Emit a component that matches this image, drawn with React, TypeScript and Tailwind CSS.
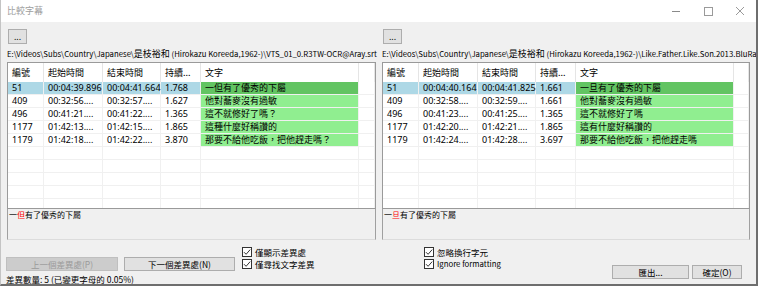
import React from "react";

const CJK = "font-['Noto_Sans_CJK_TC',sans-serif]";
const LISTF = "font-['Noto_Sans','Noto_Sans_CJK_TC',sans-serif]";

const widths = [36, 59, 58, 40, 158];

const leftRows = [
  ["51", "00:04:39.896", "00:04:41.664", "1.768", "一但有了優秀的下屬"],
  ["409", "00:32:56....", "00:32:57....", "1.627", "他對蕎麥沒有過敏"],
  ["496", "00:41:21....", "00:41:22....", "1.365", "這不就修好了嗎？"],
  ["1177", "01:42:13....", "01:42:15....", "1.865", "這種什麼好稱讚的"],
  ["1179", "01:42:18....", "01:42:22....", "3.870", "那要不給他吃飯，把他趕走嗎？"],
];
const rightRows = [
  ["51", "00:04:40.164", "00:04:41.825", "1.661", "一旦有了優秀的下屬"],
  ["409", "00:32:58....", "00:32:59....", "1.661", "他對蕎麥沒有過敏"],
  ["496", "00:41:23....", "00:41:25....", "1.365", "這不就修好了嗎"],
  ["1177", "01:42:20....", "01:42:21....", "1.865", "這有什麼好稱讚的"],
  ["1179", "01:42:24....", "01:42:28....", "3.697", "那要不給他吃飯，把他趕走嗎"],
];
const headers = ["編號", "起始時間", "結束時間", "持續...", "文字"];

function Check() {
  return (
    <svg width="10" height="10" viewBox="0 0 10 10" className="shrink-0">
      <rect x="0.5" y="0.5" width="9" height="9" fill="white" stroke="#333333" />
      <path d="M2 5.2 L4.1 7.3 L8.2 2.6" fill="none" stroke="#333333" strokeWidth="1" />
    </svg>
  );
}

function CheckRow({ label, latin }: { label: string; latin?: boolean }) {
  return (
    <div className="flex h-[12px] items-center gap-[3px]">
      <Check />
      <span
        className={`${CJK} ${latin ? "text-[7.8px]" : "text-[8.5px]"} leading-[12px] whitespace-nowrap text-black`}
      >
        {label}
      </span>
    </div>
  );
}

function Btn({ label, w, disabled }: { label: string; w: string; disabled?: boolean }) {
  return (
    <div
      className={`${w} h-[14px] flex items-center justify-center border ${
        disabled ? "border-[#bfbfbf] bg-[#cccccc] text-[#9a9a9a]" : "border-[#adadad] bg-[#e1e1e1] text-black"
      } ${CJK} text-[8.5px] leading-[12px] whitespace-nowrap`}
    >
      {label}
    </div>
  );
}

function List({ rows }: { rows: string[][] }) {
  const empty = Array.from({ length: 6 });
  return (
    <div className={`mt-[2px] h-[147px] border border-[#9a9a9a] bg-white overflow-hidden ${LISTF} text-[9px] text-black`}>
      <div className="flex h-[19px]">
        {headers.map((h, i) => (
          <div
            key={i}
            style={{ width: widths[i] }}
            className={`${CJK} shrink-0 h-full flex items-center pl-[4px] border-r border-[#e5e5e5] whitespace-nowrap`}
          >
            {h}
          </div>
        ))}
        <div className="flex-1 border-r border-[#e5e5e5]" />
      </div>
      {rows.map((r, ri) => (
        <div key={ri} className="flex h-[13px] border-b border-[#f0f0f0]">
          {r.map((c, ci) => {
            const bg =
              ci === 4 ? (ri === 0 ? "bg-[#62c462]" : "bg-[#90ee90]") : ri === 0 ? "bg-[#add8e6]" : "bg-white";
            return (
              <div
                key={ci}
                style={{ width: widths[ci] }}
                className={`${bg} shrink-0 h-[12px] leading-[12px] pl-[4px] border-r border-[#f0f0f0] whitespace-nowrap`}
              >
                {c}
              </div>
            );
          })}
          <div className="flex-1 border-r border-[#f0f0f0]" />
        </div>
      ))}
      {empty.map((_, ei) => (
        <div key={ei} className="flex h-[13px] border-b border-[#f0f0f0]">
          {widths.map((w, wi) => (
            <div key={wi} style={{ width: w }} className="shrink-0 border-r border-[#f0f0f0]" />
          ))}
          <div className="flex-1 border-r border-[#f0f0f0]" />
        </div>
      ))}
    </div>
  );
}

function DiffBox({ a, red, b }: { a: string; red: string; b: string }) {
  return (
    <div className={`h-[31px] border-l border-r border-b border-l-[#a0a0a0] border-r-[#a0a0a0] border-b-[#dcdcdc] bg-[#f0f0f0] pl-[1px] pt-[1px] ${CJK} text-[8px] leading-[10px] text-black`}>
      {a}
      <span className="text-[#ff0000]">{red}</span>
      {b}
    </div>
  );
}

function Path({ pre, cjk, post, clip }: { pre: string; cjk: string; post: string; clip?: boolean }) {
  return (
    <div
      className={`mt-[3px] h-[13px] leading-[13px] whitespace-nowrap ${
        clip ? "w-[374px] overflow-hidden" : ""
      } ${CJK} text-[7.75px] text-black`}
    >
      {pre}
      <span className="text-[9px]">{cjk}</span>
      {post}
    </div>
  );
}

function DotsBtn({ ml }: { ml: string }) {
  return (
    <div
      className={`${ml} mt-[7px] h-[15px] w-[19px] border border-[#adadad] bg-[#e1e1e1] flex items-center justify-center ${LISTF} text-[9px] leading-[9px] text-black`}
    >
      ...
    </div>
  );
}

export default function App() {
  return (
    <div className="w-[758px] h-[286px] overflow-hidden bg-[#f0f0f0] border-l border-l-[#c4c4c4] border-r-2 border-r-[#6e6e6e] border-b-2 border-b-[#6e6e6e] flex flex-col">
      {/* Title bar */}
      <div className="h-[22px] shrink-0 bg-white flex items-center">
        <div className={`pl-[6px] ${CJK} text-[9px] leading-[12px] text-[#9e9e9e]`}>比較字幕</div>
        <div className="ml-auto flex h-full">
          <div className="w-[32px] h-full flex items-center justify-center">
            <svg width="10" height="10" viewBox="0 0 10 10">
              <path d="M1 5.5 H9" stroke="#8a8a8a" strokeWidth="1" />
            </svg>
          </div>
          <div className="w-[32px] h-full flex items-center justify-center">
            <svg width="10" height="10" viewBox="0 0 10 10">
              <rect x="1.5" y="1.5" width="8" height="8" fill="none" stroke="#9a9a9a" strokeWidth="1" />
            </svg>
          </div>
          <div className="w-[32px] h-full flex items-center justify-center">
            <svg width="10" height="10" viewBox="0 0 10 10">
              <path d="M1 1 L9 9 M9 1 L1 9" stroke="#9a9a9a" strokeWidth="1" />
            </svg>
          </div>
        </div>
      </div>

      {/* Body */}
      <div className="flex-1 pl-[6px]">
        <div className="grid grid-cols-[369px_368px] gap-x-[6px]">
          {/* Left panel */}
          <div className="flex flex-col min-w-0">
            <DotsBtn ml="ml-[1px]" />
            <Path
              pre={"E:\\Videos\\Subs\\Country\\Japanese\\"}
              cjk="是枝裕和"
              post={" (Hirokazu Koreeda,1962-)\\VTS_01_0.R3TW-OCR@Aray.srt"}
            />
            <List rows={leftRows} />
            <DiffBox a="一" red="但" b="有了優秀的下屬" />
            <div className="flex">
              <div className="-ml-[1px] pt-[17px] flex flex-col">
                <div className="flex gap-[6px]">
                  <Btn label="上一個差異處(P)" w="w-[112px]" disabled />
                  <Btn label="下一個差異處(N)" w="w-[111px]" />
                </div>
                <div className={`mt-[2px] ${CJK} text-[8.5px] leading-[12px] whitespace-nowrap text-black`}>
                  差異數量: 5 (已變更字母的 0.05%)
                </div>
              </div>
              <div className="ml-[7px] pt-[6px] flex flex-col">
                <CheckRow label="僅顯示差異處" />
                <CheckRow label="僅尋找文字差異" />
              </div>
            </div>
          </div>

          {/* Right panel */}
          <div className="flex flex-col min-w-0">
            <DotsBtn ml="ml-[1px]" />
            <Path
              clip
              pre={"E:\\Videos\\Subs\\Country\\Japanese\\"}
              cjk="是枝裕和"
              post={" (Hirokazu Koreeda,1962-)\\Like.Father.Like.Son.2013.BluRay.1080p.x264.srt"}
            />
            <List rows={rightRows} />
            <DiffBox a="一" red="旦" b="有了優秀的下屬" />
            <div className="flex">
              <div className="ml-[42px] pt-[6px] flex flex-col">
                <CheckRow label="忽略換行字元" />
                <CheckRow label="Ignore formatting" latin />
              </div>
              <div className="ml-auto mr-[8px] pt-[25px] flex gap-[3px]">
                <Btn label="匯出..." w="w-[77px]" />
                <Btn label="確定(O)" w="w-[50px]" />
              </div>
            </div>
          </div>
        </div>
      </div>
    </div>
  );
}
